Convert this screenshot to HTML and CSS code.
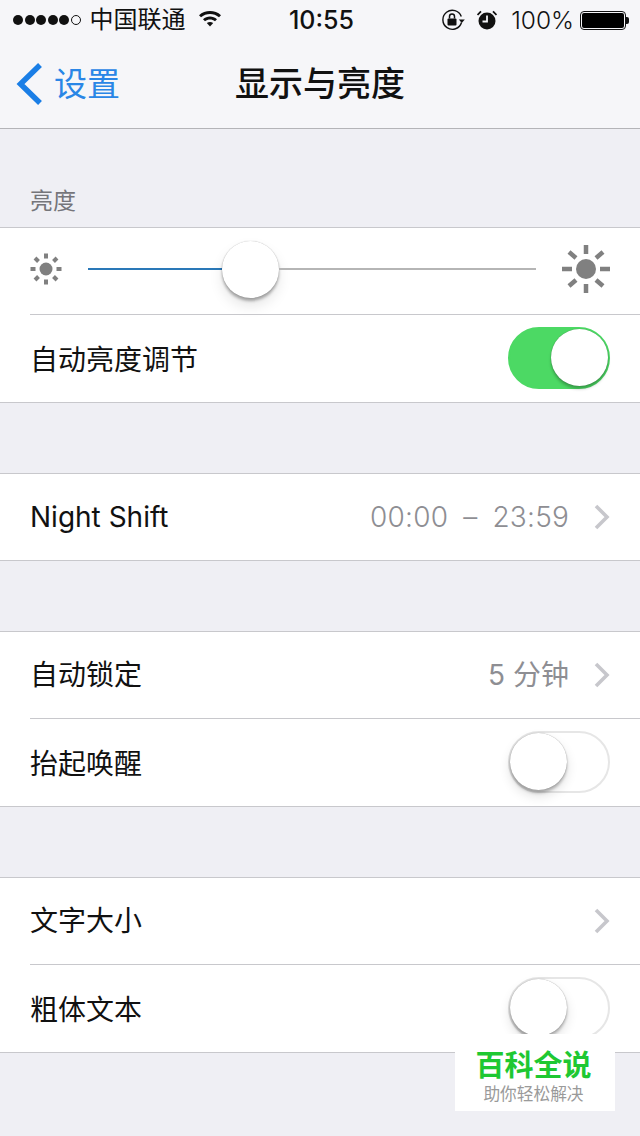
FILE: index.html
```html
<!DOCTYPE html>
<html lang="zh">
<head>
<meta charset="utf-8">
<title>显示与亮度</title>
<link rel="stylesheet" href="styles.css">
</head>
<body>
<div class="screen">
  <header class="top">
    <div class="status">
      <div class="status-left">
        <div class="signal"><i></i><i></i><i></i><i></i><i></i><i class="empty"></i></div>
        <span class="carrier">中国联通</span>
        <svg class="wifi" width="24" height="18" viewBox="0 0 24 18"><path d="M1 6.200C7 .6 17 .6 23 6.200l-2 2.100C16 3.800 8 3.800 3 8.300z"/><path d="M5 10.200c4-3.600 10-3.600 14 0l-2 2.100c-3-2.500-7-2.500-10 0z"/><path d="M8.800 14c2-1.500 4.400-1.500 6.400 0L12 17.400z"/></svg>
      </div>
      <div class="clock">10:55</div>
      <div class="status-right">
        <svg class="lock" width="24" height="22" viewBox="0 0 24 22"><path d="M20.500 13.500A9.500 9.500 0 1 1 20.300 7.500" fill="none" stroke="#111" stroke-width="1.400"/><path d="M17.800 10.500h6l-3 3.500z" fill="#111"/><rect x="6.500" y="9.500" width="9" height="7" rx="1" fill="#111"/><path d="M8.500 9.500V7.500a2.500 2.500 0 0 1 5 0v2" fill="none" stroke="#111" stroke-width="1.500"/></svg>
        <svg class="alarm" width="20" height="22" viewBox="1 0 20 22"><circle cx="11" cy="12" r="8.500" fill="#111"/><path d="M11 6.500V12.500H6.500" fill="none" stroke="#f4f5f8" stroke-width="1.800"/><path d="M1.500 6 5 2.300M20.500 6 17 2.300" stroke="#111" stroke-width="1.800"/></svg>
        <span class="pct">100%</span>
        <div class="battery"><div class="battery-body"><div class="battery-fill"></div></div><div class="battery-tip"></div></div>
      </div>
    </div>
    <nav class="nav">
      <div class="back">
        <svg width="28" height="44" viewBox="0 0 28 44"><path d="M25 3 5.500 22 25 41" fill="none" stroke="#1a7ee6" stroke-width="5.500"/></svg>
        <span>设置</span>
      </div>
      <div class="title">显示与亮度</div>
    </nav>
  </header>

  <div class="section-label">亮度</div>
  <section class="group">
    <div class="row slider-row">
      <svg class="sun" width="34" height="34" viewBox="0 0 34 34"><circle cx="17" cy="17" r="6.500"/><g class="rays-small"><path d="M17 1.500v5M17 27.500v5M1.500 17h5M27.500 17h5M6 6l3.500 3.500M24.500 24.500 28 28M6 28l3.500-3.500M24.500 9.500 28 6"/></g></svg>
      <div class="track">
        <div class="track-on"></div>
        <div class="thumb"></div>
        <div class="track-off"></div>
      </div>
      <svg class="sun" width="50" height="50" viewBox="0 0 50 50"><circle cx="25" cy="25" r="10"/><g class="rays-big"><path d="M25 1v9M25 40v9M1 25h10M39 25h10M8 8l7 6M35 36l7 6M8 42l7-6M35 14l7-6"/></g></svg>
    </div>
    <div class="row sep">
      <span class="label">自动亮度调节</span>
      <div class="switch on"><div class="knob"></div></div>
    </div>
  </section>

  <section class="group gap">
    <div class="row">
      <span class="label">Night Shift</span>
      <span class="value time">00:00 – 23:59</span>
      <svg class="chev" width="18" height="26" viewBox="0 0 18 26"><path d="M3 2l11 11L3 24" fill="none" stroke="#c7c7cc" stroke-width="3.600"/></svg>
    </div>
  </section>

  <section class="group gap">
    <div class="row">
      <span class="label">自动锁定</span>
      <span class="value">5 分钟</span>
      <svg class="chev" width="18" height="26" viewBox="0 0 18 26"><path d="M3 2l11 11L3 24" fill="none" stroke="#c7c7cc" stroke-width="3.600"/></svg>
    </div>
    <div class="row sep">
      <span class="label">抬起唤醒</span>
      <div class="switch"><div class="knob"></div></div>
    </div>
  </section>

  <section class="group gap">
    <div class="row">
      <span class="label">文字大小</span>
      <span class="value"></span>
      <svg class="chev" width="18" height="26" viewBox="0 0 18 26"><path d="M3 2l11 11L3 24" fill="none" stroke="#c7c7cc" stroke-width="3.600"/></svg>
    </div>
    <div class="row sep">
      <span class="label">粗体文本</span>
      <div class="switch"><div class="knob"></div></div>
    </div>
  </section>

  <div class="watermark">
    <div class="wm-title">百科全说</div>
    <div class="wm-sub">助你轻松解决</div>
  </div>
</div>
</body>
</html>
```
FILE: styles.css
```css
* { box-sizing: border-box; }
html, body { margin: 0; padding: 0; }
body { background: #efeff4; font-family: "Inter", "Noto Sans CJK SC", sans-serif; color: #111; }
.screen { position: relative; width: 640px; height: 1136px; overflow: hidden; background: #efeff4; }

.top { height: 129px; background: #f6f6f9; border-bottom: 1px solid #b4b4b8; }
.status { height: 40px; display: flex; align-items: center; justify-content: space-between; position: relative; padding: 0 11px 0 13px; }
.status-left { display: flex; align-items: center; }
.signal { display: flex; gap: 1.500px; }
.signal i { display: block; width: 10px; height: 10px; border-radius: 50%; background: #111; }
.signal i.empty { background: none; border: 1px solid #111; }
.carrier { font-size: 24px; margin-left: 9px; line-height: 30px; }
.wifi { margin-left: 12px; margin-top: -4px; fill: #111; }
.clock { position: absolute; left: 3px; right: 0; top: 5px; text-align: center; font-size: 25px; line-height: 30px; font-weight: 500; }
.status-right { display: flex; align-items: center; }
.lock { margin-right: 12px; }
.alarm { margin-right: 14px; }
.pct { font-size: 24.500px; font-weight: 300; line-height: 30px; }
.battery { display: flex; align-items: center; margin-left: 6px; }
.battery-body { width: 46px; height: 19px; border: 1px solid #111; border-radius: 4px; padding: 1px; }
.battery-fill { height: 100%; background: #000; border-radius: 2px; }
.battery-tip { width: 3px; height: 7px; background: #111; border-radius: 0 2px 2px 0; }

.nav { height: 88px; position: relative; display: flex; align-items: center; justify-content: center; }
.back { position: absolute; left: 15px; top: 22px; display: flex; align-items: center; gap: 11px; color: #2a86e6; font-size: 33px; line-height: 44px; }
.back svg { display: block; }
.title { font-size: 34px; font-weight: 500; line-height: 44px; margin-top: -1px; }

.section-label { height: 98px; padding: 55px 0 0 30px; font-size: 23px; line-height: 34px; color: #75757a; }

.group { background: #fff; border-top: 1px solid #c8c8cc; border-bottom: 1px solid #c8c8cc; }
.group.gap { margin-top: 70px; }
.row { height: 86px; display: flex; align-items: center; padding-left: 30px; padding-right: 30px; position: relative; }
.row.sep { height: 87px; margin-top: 1px; }
.row.sep::before { content: ""; position: absolute; left: 30px; right: 0; top: -1px; height: 1px; background: #c8c8cc; }
.label { font-size: 28px; line-height: 40px; color: #111; flex: 1; }
.sep .label { padding-top: 2px; }
.value { font-size: 28px; line-height: 40px; color: #8e8e93; margin-right: 24px; }
.time { letter-spacing: .2px; word-spacing: 7px; font-weight: 300; }
.chev { margin-right: -1px; flex: none; }

.slider-row { padding-left: 29px; padding-right: 29px; padding-bottom: 4px; }
.sun { flex: none; fill: #808080; }
.rays-small path { stroke: #808080; stroke-width: 4; fill: none; }
.rays-big path { stroke: #808080; stroke-width: 4.500; fill: none; }
.track { flex: 1; display: flex; align-items: center; margin: 0 25px; position: relative; }
.track-on { width: 134px; height: 2px; background: #2a78b8; }
.track-off { flex: 1; height: 2px; background: #b5b5b5; }
.thumb { width: 57px; height: 57px; border-radius: 50%; background: #fff; box-shadow: 0 0 1px rgba(0,0,0,.3), 0 3px 3px rgba(0,0,0,.3), 0 8px 14px rgba(0,0,0,.1); flex: none; }

.switch { width: 102px; height: 62px; border-radius: 31px; background: #fff; border: 2px solid #e6e6e6; position: relative; flex: none; }
.sep .switch { margin-top: -2px; }
.switch .knob { position: absolute; left: 0; top: 0; width: 57px; height: 57px; border-radius: 50%; background: #fff; box-shadow: 0 0 1px rgba(0,0,0,.4), 0 3px 3px rgba(0,0,0,.25), 0 6px 12px rgba(0,0,0,.12); }
.switch.on { background: #4cd964; border-color: #4cd964; }
.switch.on .knob { left: 41px; box-shadow: 0 0 1px rgba(0,0,0,.4), 0 3px 3px rgba(0,0,0,.25); }

.watermark { position: absolute; left: 455px; top: 1034px; width: 160px; height: 77px; background: #fff; text-align: center; padding: 15px 3px 0 0; }
.wm-title { font-size: 29px; line-height: 34px; font-weight: 700; color: #1ec832; }
.wm-sub { font-size: 16.700px; line-height: 22px; color: #9a9a9a; }
```
